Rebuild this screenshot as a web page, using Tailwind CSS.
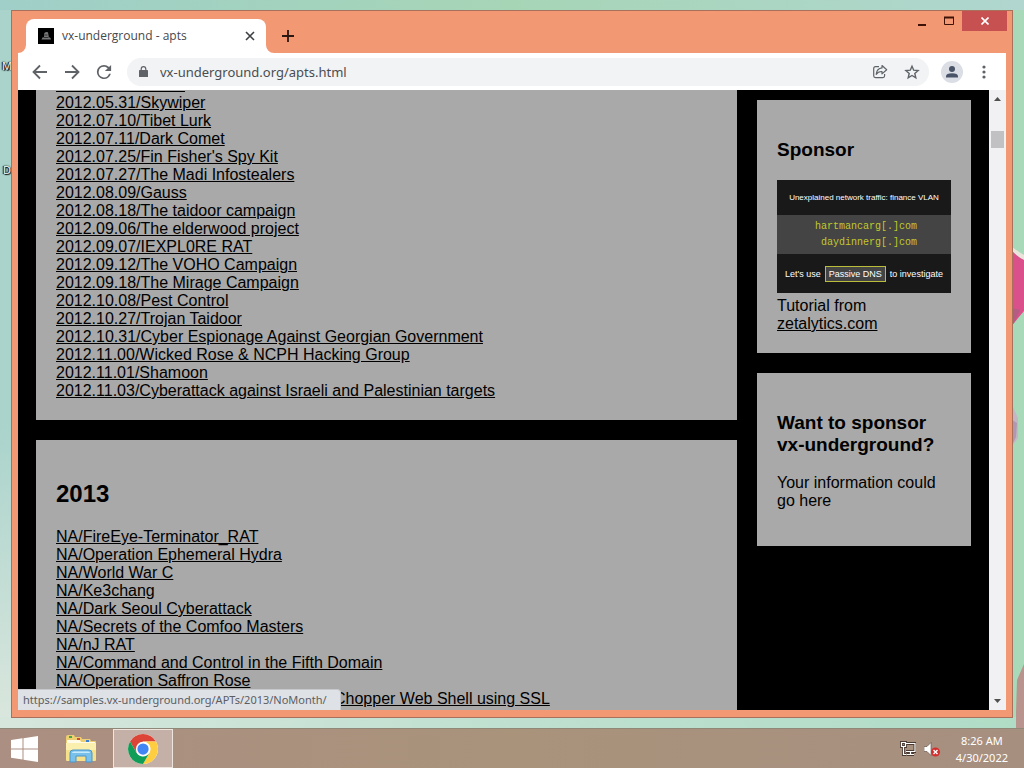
<!DOCTYPE html>
<html lang="en">
<head>
<meta charset="utf-8">
<title>vx-underground - apts</title>
<script src="https://cdn.jsdelivr.net/npm/@tailwindcss/browser@4"></script>
</head>
<body class="relative flex h-screen flex-col overflow-hidden bg-linear-to-r from-[#a9d3cb] via-[#b5dcc8] to-[#a8d9b9] font-['Open_Sans','Noto_Sans',sans-serif]">

<!-- wallpaper -->
<div class="absolute inset-x-0 top-0 h-[10px] bg-linear-to-r from-[#9fcfc8] via-[#a6d5b6] to-[#b0d6cf]"></div>
<div class="absolute left-0 top-[420px] h-[310px] w-[12px] bg-linear-to-b from-transparent to-[#dbe7de]"></div>
<div class="absolute left-0 top-[717px] h-[11px] w-full bg-linear-to-r from-[#d6e6dd] via-[#bfe0d0] to-[#b0dcc6]"></div>
<svg class="absolute right-0 top-0 h-[728px] w-[12px]" viewBox="0 0 12 728" aria-hidden="true">
  <path d="M0 247Q7 252 12 255V263L0 251Z" fill="#e9e4dc"/>
  <path d="M0 251Q6 257 12 260V311L2 323L0 325Z" fill="#d9508a"/>
  <path d="M0 308L8 310L2 323L0 325Z" fill="#b45d83"/>
  <path d="M0 405L6 418V438L0 446Z" fill="#c3b5c4"/>
  <path d="M0 420L5 423L4 437L0 445Z" fill="#a98bab" opacity=".7"/>
  <path d="M5 680L12 664V728H4V712Z" fill="#b9938d"/>
</svg>
<span class="absolute left-[2px] top-[59px] text-[11px] leading-[14px] text-white [text-shadow:0_0_2px_#000,1px_1px_1px_#000,-1px_0_1px_#000]">M</span>
<span class="absolute left-[3px] top-[163px] text-[11px] leading-[14px] text-white [text-shadow:0_0_2px_#000,1px_1px_1px_#000,-1px_0_1px_#000]">D</span>

<div class="relative flex min-h-0 flex-1 px-[11px] pb-[10px] pt-[10px]">
  <div class="flex min-w-0 flex-1 flex-col border border-[#a9705c] bg-[#f29873] px-[6px] pb-[7px]">

    <!-- title bar -->
    <header class="-mr-px flex h-[42px] shrink-0 items-start">
      <div class="relative ml-2 mt-2 flex h-[34px] w-[240px] items-center rounded-t-lg bg-white pl-3 pr-[10px]">
        <svg class="absolute -left-2 bottom-0 size-2" viewBox="0 0 8 8" aria-hidden="true"><path d="M8 0v8H0a8 8 0 0 0 8-8z" fill="#fff"/></svg>
        <svg class="absolute -right-2 bottom-0 size-2" viewBox="0 0 8 8" aria-hidden="true"><path d="M0 0v8h8a8 8 0 0 1-8-8z" fill="#fff"/></svg>
        <svg class="size-4" viewBox="0 0 16 16" aria-hidden="true"><path d="M0 0h16v16H0z" fill="#000"/><path d="M3.500 11.500l1-2 1.500-.5.300-4 1.700-1 2 .3.800 4.700 1.700 1 .5 1.500z" fill="#777"/><path d="M6.500 7h3M5.500 9.500h5" stroke="#333"/></svg>
        <span class="ml-2 flex-1 whitespace-nowrap text-[12px] text-[#45484c]">vx-underground - apts</span>
        <button aria-label="Close tab" class="flex size-3 items-center justify-center"><svg class="size-3" viewBox="0 0 12 12"><path d="M2 2l8 8M10 2l-8 8" stroke="#3c4043" stroke-width="1.600"/></svg></button>
      </div>
      <button aria-label="New tab" class="ml-4 mt-[19px] size-3"><svg class="size-3" viewBox="0 0 12 12"><path d="M6 0v12M0 6h12" stroke="#2b1712" stroke-width="1.800"/></svg></button>
      <div class="ml-auto flex h-5">
        <button aria-label="Minimize" class="flex w-[27px] items-center justify-center"><svg class="size-4" viewBox="0 0 16 16"><path d="M4 12h8" stroke="#3f1208" stroke-width="2"/></svg></button>
        <button aria-label="Maximize" class="flex w-[27px] items-center justify-center"><svg class="h-4 w-4" viewBox="0 0 16 16"><path d="M3.500 4.500h9v7h-9z" fill="none" stroke="#3f1208"/><path d="M3 4.500h10" stroke="#3f1208" stroke-width="2"/></svg></button>
        <button aria-label="Close window" class="flex w-[45px] items-center justify-center bg-[#c75050]"><svg class="size-2" viewBox="0 0 8 8"><path d="M.5.5l7 7M7.500.5l-7 7" stroke="#fff" stroke-width="1.600"/></svg></button>
      </div>
    </header>

    <!-- toolbar -->
    <nav class="flex h-[37px] shrink-0 items-center bg-white pl-[14px] pr-[14px]">
      <button aria-label="Back" class="size-4"><svg class="size-4" viewBox="0 0 16 16" fill="none" stroke="#5f6368" stroke-width="1.800"><path d="M15 8H2M8 1.500L1.500 8L8 14.500"/></svg></button>
      <button aria-label="Forward" class="ml-4 size-4"><svg class="size-4" viewBox="0 0 16 16" fill="none" stroke="#5f6368" stroke-width="1.800"><path d="M1 8h13M8 1.500L14.500 8L8 14.500"/></svg></button>
      <button aria-label="Reload" class="ml-4 size-4"><svg class="size-4" viewBox="3 3 18 18" fill="#5f6368"><path d="M17.650 6.350A7.960 7.960 0 0 0 12 4a8 8 0 1 0 7.730 10h-2.080A6 6 0 1 1 12 6c1.660 0 3.140.69 4.220 1.780L13 11h7V4z"/></svg></button>
      <div class="ml-[15px] flex h-7 flex-1 items-center rounded-full bg-[#f1f3f4] pl-3 pr-[9px]">
        <svg class="h-[11px] w-[9px]" viewBox="0 0 9 11" aria-hidden="true"><path d="M.6 4h7.800q.6 0 .6.600v5.800q0 .6-.6.600H.6q-.6 0-.6-.6V4.600Q0 4 .6 4z" fill="#5f6368"/><path d="M2.200 4.500V3a2.300 2.300 0 0 1 4.600 0v1.500" fill="none" stroke="#5f6368" stroke-width="1.200"/></svg>
        <input aria-label="Address" value="vx-underground.org/apts.html" class="ml-3 h-6 min-w-0 flex-1 bg-transparent font-['Noto_Sans','Open_Sans',sans-serif] text-[13px] text-[#4a4d51] outline-none">
        <button aria-label="Share" class="size-4"><svg class="size-4" viewBox="0 0 16 16" fill="none" stroke="#5f6368" stroke-width="1.200" stroke-linejoin="round"><path d="M7 2.700H3.500Q1.700 2.700 1.700 4.500v7.300q0 1.800 1.800 1.800h7.300q1.800 0 1.800-1.800V10"/><path d="M10 1.500l4.700 4.200L10 9.900V7.500Q6.200 7.300 4.200 10.300Q4.800 4.400 10 3.900z"/></svg></button>
        <button aria-label="Bookmark this page" class="ml-4 size-4"><svg class="size-4" viewBox="0 0 16 16" fill="none" stroke="#5f6368" stroke-width="1.400"><path d="M8 2.200l1.700 4 4.400.4-3.300 2.900 1 4.300L8 11.500l-3.800 2.300 1-4.300L1.900 6.600l4.400-.4z"/></svg></button>
      </div>
      <button aria-label="Profile" class="ml-3 size-[22px]"><svg class="size-[22px]" viewBox="0 0 22 22"><circle cx="11" cy="11" r="11" fill="#dcdee6"/><circle cx="11" cy="8" r="3" fill="#4a5468"/><path d="M5 16.500v-1.200q0-3 6-3t6 3v1.200z" fill="#4a5468"/></svg></button>
      <button aria-label="Menu" class="ml-[13px] size-4"><svg class="size-4" viewBox="0 0 16 16" fill="#5f6368"><circle cx="8" cy="3" r="1.600"/><circle cx="8" cy="8" r="1.600"/><circle cx="8" cy="13" r="1.600"/></svg></button>
    </nav>

    <!-- page -->
    <div class="relative flex min-h-0 flex-1 bg-black">
      <div class="flex min-w-0 flex-1 gap-5 overflow-hidden px-[18px] font-['Liberation_Sans',Arial,sans-serif] text-[16px] leading-[18px] text-black">
        <main class="-mt-[14px] flex min-w-0 flex-1 flex-col gap-5">
          <section class="bg-[#a9a9a9] px-5 pb-5">
            <ul class="whitespace-nowrap underline">
              <li><a href="#">2012.05.31/Flame</a></li>
              <li><a href="#">2012.05.31/Skywiper</a></li>
              <li><a href="#">2012.07.10/Tibet Lurk</a></li>
              <li><a href="#">2012.07.11/Dark Comet</a></li>
              <li><a href="#">2012.07.25/Fin Fisher's Spy Kit</a></li>
              <li><a href="#">2012.07.27/The Madi Infostealers</a></li>
              <li><a href="#">2012.08.09/Gauss</a></li>
              <li><a href="#">2012.08.18/The taidoor campaign</a></li>
              <li><a href="#">2012.09.06/The elderwood project</a></li>
              <li><a href="#">2012.09.07/IEXPL0RE RAT</a></li>
              <li><a href="#">2012.09.12/The VOHO Campaign</a></li>
              <li><a href="#">2012.09.18/The Mirage Campaign</a></li>
              <li><a href="#">2012.10.08/Pest Control</a></li>
              <li><a href="#">2012.10.27/Trojan Taidoor</a></li>
              <li><a href="#">2012.10.31/Cyber Espionage Against Georgian Government</a></li>
              <li><a href="#">2012.11.00/Wicked Rose &amp; NCPH Hacking Group</a></li>
              <li><a href="#">2012.11.01/Shamoon</a></li>
              <li><a href="#">2012.11.03/Cyberattack against Israeli and Palestinian targets</a></li>
            </ul>
          </section>
          <section class="flex-1 bg-[#a9a9a9] p-5">
            <h2 class="my-5 text-[24px] font-bold leading-7">2013</h2>
            <ul class="whitespace-nowrap underline">
              <li><a href="#">NA/FireEye-Terminator_RAT</a></li>
              <li><a href="#">NA/Operation Ephemeral Hydra</a></li>
              <li><a href="#">NA/World War C</a></li>
              <li><a href="#">NA/Ke3chang</a></li>
              <li><a href="#">NA/Dark Seoul Cyberattack</a></li>
              <li><a href="#">NA/Secrets of the Comfoo Masters</a></li>
              <li><a href="#">NA/nJ RAT</a></li>
              <li><a href="#">NA/Command and Control in the Fifth Domain</a></li>
              <li><a href="#">NA/Operation Saffron Rose</a></li>
              <li class="pl-[278px]"><a href="#">Chopper Web Shell using SSL</a></li>
            </ul>
          </section>
        </main>
        <aside class="flex w-[214px] shrink-0 flex-col gap-5 pt-[10px]">
          <section class="bg-[#a9a9a9] p-5">
            <h3 class="my-[19px] text-[19px] font-bold leading-[22px]">Sponsor</h3>
            <div class="mb-1 flex h-[113px] flex-col whitespace-nowrap bg-[#191919] text-white">
              <div class="flex h-[35px] items-center justify-center text-[8px]">Unexplained network traffic: finance VLAN</div>
              <div class="flex h-[39px] flex-col items-end justify-center bg-[#444] pr-[34px] font-['Liberation_Mono',monospace] text-[10px] leading-4 text-[#c3c72c]"><span>hartmancarg[.]com</span><span>daydinnerg[.]com</span></div>
              <div class="flex flex-1 items-center justify-center gap-1 text-[9px] leading-[14px]"><span>Let's use</span><span class="border border-[#b9bd3a] bg-[#444] px-[3px]">Passive DNS</span><span>to investigate</span></div>
            </div>
            <p>Tutorial from <a href="#" class="underline">zetalytics.com</a></p>
          </section>
          <section class="bg-[#a9a9a9] p-5 pb-9">
            <h3 class="mb-[18px] mt-[19px] text-[19px] font-bold leading-[22px]">Want to sponsor vx-underground?</h3>
            <p>Your information could go here</p>
          </section>
        </aside>
      </div>
      <!-- scrollbar -->
      <div class="flex w-[17px] shrink-0 flex-col items-center bg-[#f1f1f3]">
        <svg class="h-[17px] w-[17px]" viewBox="0 0 17 17" aria-hidden="true"><path d="M5 11l3.500-4 3.500 4z" fill="#505050"/></svg>
        <div class="mt-6 h-[17px] w-[13px] bg-[#c1c1c3]"></div>
        <svg class="mt-auto h-[17px] w-[17px]" viewBox="0 0 17 17" aria-hidden="true"><path d="M5 6l3.500 4L12 6z" fill="#505050"/></svg>
      </div>
      <!-- link status bubble -->
      <div class="absolute bottom-0 left-0 flex h-[21px] min-w-[323px] items-center whitespace-nowrap rounded-tr-sm border-r border-t border-[#c6c8cb] bg-[#dee1e6] pl-[5px] pr-[5px] font-['Noto_Sans','Open_Sans',sans-serif] text-[11px] text-[#5b5e63]">https://samples.vx-underground.org/APTs/2013/NoMonth/</div>
    </div>
  </div>
</div>

<!-- taskbar -->
<footer class="relative flex h-10 shrink-0 items-stretch border-t border-[#8f8878] bg-linear-to-r from-[#ab8f82] via-[#a9937b] to-[#a78f80]">
  <button aria-label="Start" class="flex w-12 items-center justify-center"><svg class="h-[26px] w-[27px]" viewBox="0 0 27 26" fill="#fff"><path d="M0 4l11.500-1.700v10.200H0zM12.500 2.200L27 0v12.500H12.500zM0 13.500h11.500v10L0 21.800zM12.500 13.500H27V26l-14.500-2.300z"/></svg></button>
  <button aria-label="File Explorer" class="flex w-[65px] items-center justify-center"><svg class="h-[30px] w-8" viewBox="0 0 32 30"><path d="M1 3q0-2 2-2h6l1 2h6l1 2h8l1 2h4q1 0 1 1v18H1z" fill="#edcf72"/><path d="M2 6h13l1 2h14v3H2z" fill="#fffbe6"/><path d="M1 9h30v17q0 1-1 1H2q-1 0-1-1z" fill="#f6e08a"/><path d="M1 9h30v7H1z" fill="#fbefae"/><path d="M4 2h3v2H4z" fill="#3da650"/><path d="M12 4h3v2h-3z" fill="#d44b36"/><path d="M21 6h3v2h-3z" fill="#3b7fd0"/><path d="M5 28V19q0-3 3-3h16q3 0 3 3v9h-6v-6H11v6z" fill="#79c0ea" stroke="#4a96cd"/><path d="M7 19q0-1.500 2-1.500h14q2 0 2 1.500z" fill="#c8ebfb"/></svg></button>
  <button aria-label="Google Chrome" class="flex w-[60px] items-center justify-center border border-[#eee5df] bg-[#c4b0a6]"><svg class="size-[30px]" viewBox="0 0 48 48"><circle cx="24" cy="24" r="24" fill="#fff"/><path d="M24 12h20.780A24 24 0 0 0 3.220 12L13.610 30z" fill="#db4437"/><path d="M34.390 30L24 48A24 24 0 0 0 44.780 12H24a12 12 0 0 1 10.390 18z" fill="#ffcd40"/><path d="M13.610 30L3.220 12A24 24 0 0 0 24 48l10.390-18a12 12 0 0 1-20.780 0z" fill="#0f9d58"/><circle cx="24" cy="24" r="11.500" fill="#fff"/><circle cx="24" cy="24" r="9" fill="#4285f4"/></svg></button>
  <div class="ml-auto flex items-center pr-4 text-white">
    <svg class="size-4" viewBox="0 0 16 16" fill="none" aria-hidden="true"><path d="M6 2.500h9v8H6M10.500 10.500v3M7 13.500h7M1.500 1.500h4v4h-4zM3.500 5.500v8h3" stroke="#4a3a32" stroke-width="3"/><path d="M6 2.500h9v8H6M10.500 10.500v3M7 13.500h7M1.500 1.500h4v4h-4zM3.500 5.500v8h3" stroke="#fff" stroke-width="1.200"/></svg>
    <svg class="ml-2 size-4" viewBox="0 0 16 16" aria-hidden="true"><path d="M0 5.500h3l4-4v13l-4-4H0z" fill="#fff" stroke="#5b4a40" stroke-width=".6"/><circle cx="11.500" cy="11" r="4.500" fill="#d32f2f"/><path d="M9.500 9l4 4M13.500 9l-4 4" stroke="#fff" stroke-width="1.400"/></svg>
    <div class="ml-4 text-center font-['Noto_Sans','Open_Sans',sans-serif] text-[11px] leading-[17px]"><div>8:26 AM</div><div>4/30/2022</div></div>
  </div>
</footer>
</body>
</html>
